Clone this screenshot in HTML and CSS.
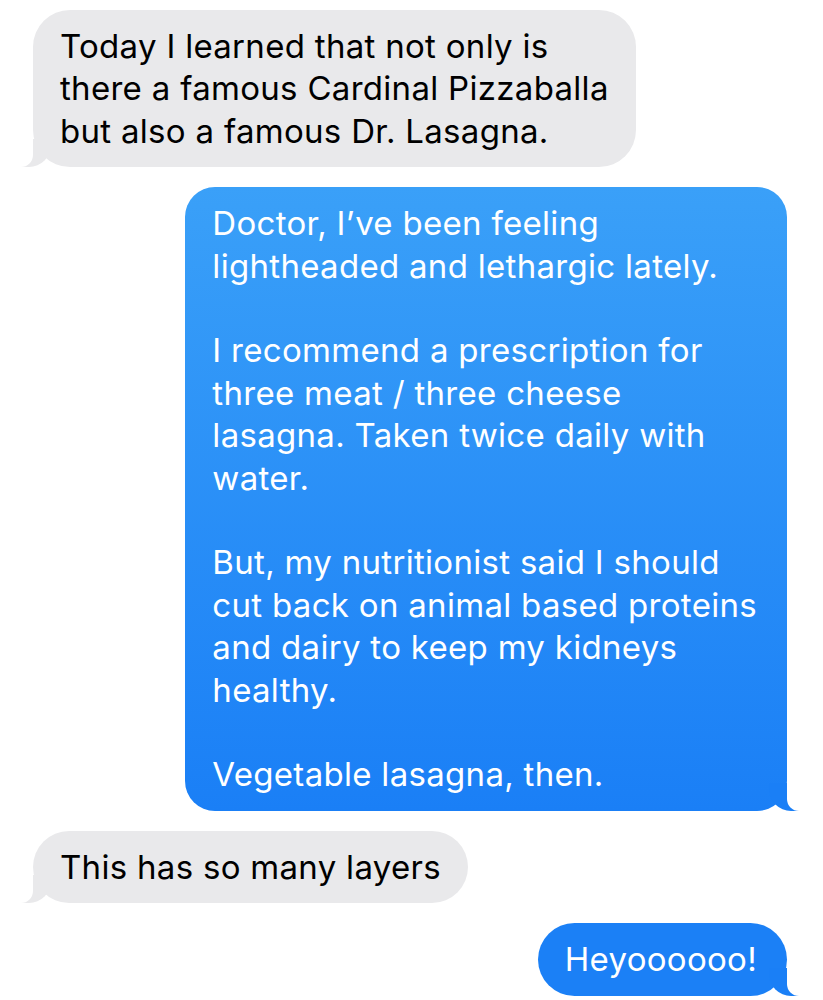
FILE: index.html
```html
<!DOCTYPE html>
<html>
<head>
    <meta charset="UTF-8">
    <meta name="viewport" content="width=device-width">
    <title>Messages</title>
    <link rel="stylesheet" href="styles.css">
</head>
<body>
<div class="thread">
    <div class="bubble them">
        <p>Today I learned that not only is<br>there a famous Cardinal Pizzaballa<br>but also a famous Dr. Lasagna.</p>
    </div>
    <div class="bubble me tall">
        <p>Doctor, I’ve been feeling<br>lightheaded and lethargic lately.</p>
        <p>I recommend a prescription for<br>three meat / three cheese<br>lasagna. Taken twice daily with<br>water.</p>
        <p>But, my nutritionist said I should<br>cut back on animal based proteins<br>and dairy to keep my kidneys<br>healthy.</p>
        <p>Vegetable lasagna, then.</p>
    </div>
    <div class="bubble them">
        <p>This has so many layers</p>
    </div>
    <div class="bubble me">
        <p>Heyoooooo!</p>
    </div>
</div>
</body>
</html>
```

FILE: styles.css
```css
body {
    background: #fff;
    margin: 0;
    padding: 0;
    font-family: Inter, "Noto Sans", sans-serif;
}

.thread {
    display: flex;
    flex-direction: column;
    gap: 20px;
    padding: 10px 36px 0 33px;
}

.bubble {
    position: relative;
    padding: 15px 27px;
    border-radius: 37px;
    font-size: 33px;
    letter-spacing: 0.3px;
    line-height: 42.4px;
}

.bubble p {
    margin: 0;
}

.bubble p + p {
    margin-top: 42.4px;
}

.them {
    align-self: flex-start;
    background: #e9e9eb;
    color: #000;
}

.me {
    align-self: flex-end;
    padding-right: 30px;
    background: #1b80f6;
    color: #fff;
}

.me.tall {
    border-radius: 30px;
    background: linear-gradient(#3aa0f8, #1a7ff6);
}

/* tails */
.them::before, .them::after,
.me::before, .me::after {
    content: "";
    position: absolute;
    bottom: 0;
    height: 28px;
}

.them::before {
    left: -12px;
    width: 30px;
    background: #e9e9eb;
    border-bottom-right-radius: 22px;
}

.them::after {
    left: -16px;
    width: 16px;
    background: #fff;
    border-bottom-right-radius: 12px;
}

.me::before {
    right: -12px;
    width: 30px;
    background: #1a7ff6;
    border-bottom-left-radius: 22px;
}

.me::after {
    right: -16px;
    width: 16px;
    background: #fff;
    border-bottom-left-radius: 12px;
}
```
